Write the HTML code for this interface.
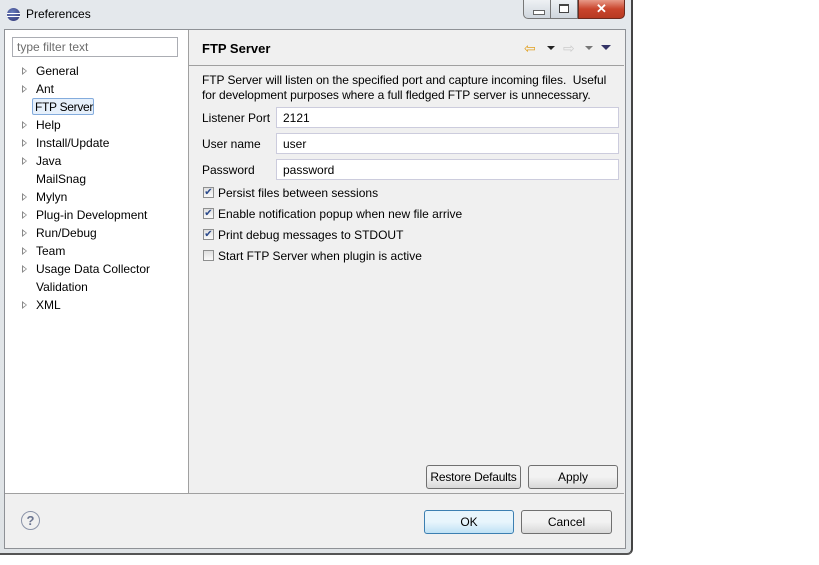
<!DOCTYPE html>
<html><head><style>
body{margin:0;width:819px;height:565px;background:#fff;position:relative;overflow:hidden;font-family:"Liberation Sans",sans-serif;font-size:12px;color:#000}
.abs{position:absolute}
.frame{left:0;top:0;width:631px;height:553px;background:linear-gradient(#e4e8ec,#dfe3e6);border-right:2px solid #444;border-bottom:2px solid #555;border-radius:0 0 6px 0}
.inner{left:4px;top:29px;width:620px;height:518px;background:#f0f0f0;border:1px solid #8e9196}
.tree{left:5px;top:30px;width:183px;height:463px;background:#fff;border-right:1px solid #a0a0a0}
.input{background:#fff;border:1px solid #ccd;box-sizing:border-box}
.item{position:absolute;left:36px;font-size:12px}
.tri{position:absolute;left:22px;width:0;height:0;border-left:5px solid #888;border-top:4px solid transparent;border-bottom:4px solid transparent}
.tri::after{content:"";position:absolute;left:-4px;top:-2px;border-left:3px solid #fff;border-top:2px solid transparent;border-bottom:2px solid transparent}
.btn{position:absolute;box-sizing:border-box;border:1px solid #707070;border-radius:3px;background:linear-gradient(#f2f2f2 50%,#d8d8d8);text-align:center;font-size:12px}
.cb{position:absolute;left:203px;width:11px;height:11px;border:1px solid #8e8f8f;background:linear-gradient(#e0e0e0,#fafafa);box-sizing:border-box;font-size:10px;line-height:9px;text-align:center;color:#2b4a8c}
.cl{position:absolute;left:218px}
</style></head><body>
<div class="abs frame"></div>
<div class="abs" style="left:7px;top:8px;width:13px;height:13px;border-radius:50%;background:radial-gradient(circle at 40% 35%,#6a7fc0,#2c2f6e)"></div>
<div class="abs" style="left:7px;top:13px;width:13px;height:1px;background:#fff"></div>
<div class="abs" style="left:7px;top:16px;width:13px;height:1px;background:#fff"></div>
<div class="abs" style="left:26px;top:7px;font-size:12px">Preferences</div>
<div class="abs" style="left:523px;top:0;width:28px;height:19px;border:1px solid #777;border-top:none;border-radius:0 0 0 5px;background:linear-gradient(#eef1f4,#cfd6dd);box-sizing:border-box"><div class="abs" style="left:9px;top:10px;width:10px;height:3px;border:1px solid #666;background:#fff"></div></div>
<div class="abs" style="left:551px;top:0;width:27px;height:19px;border:1px solid #777;border-top:none;border-left:none;background:linear-gradient(#eef1f4,#cfd6dd);box-sizing:border-box"><div class="abs" style="left:8px;top:4px;width:8px;height:6px;border:1px solid #444;border-top-width:2px;background:#fff"></div></div>
<div class="abs" style="left:578px;top:0;width:47px;height:19px;border:1px solid #6d2a1e;border-top:none;border-radius:0 0 5px 0;background:linear-gradient(#e79a88,#c9452d 50%,#b73a22);box-sizing:border-box;color:#fff;font-weight:bold;text-align:center;font-size:13px;line-height:17px">✕</div>
<div class="abs inner"></div>
<div class="abs tree"></div>
<div class="abs input" style="left:12px;top:37px;width:166px;height:20px;border-color:#abadb3;color:#6d6d6d;padding:2px 4px;font-size:12px">type filter text</div>
<div class="tri" style="top:67px"></div><div class="item" style="top:64px">General</div>
<div class="tri" style="top:85px"></div><div class="item" style="top:82px">Ant</div>
<div class="abs" style="left:32px;top:98px;width:62px;height:17px;border:1px solid #84acdd;border-radius:2px;background:#e6f0fb;box-sizing:border-box"></div>
<div class="item" style="top:100px;left:35px;letter-spacing:-0.3px">FTP Server</div>
<div class="tri" style="top:121px"></div><div class="item" style="top:118px">Help</div>
<div class="tri" style="top:139px"></div><div class="item" style="top:136px">Install/Update</div>
<div class="tri" style="top:157px"></div><div class="item" style="top:154px">Java</div>
<div class="item" style="top:172px">MailSnag</div>
<div class="tri" style="top:193px"></div><div class="item" style="top:190px">Mylyn</div>
<div class="tri" style="top:211px"></div><div class="item" style="top:208px">Plug-in Development</div>
<div class="tri" style="top:229px"></div><div class="item" style="top:226px">Run/Debug</div>
<div class="tri" style="top:247px"></div><div class="item" style="top:244px">Team</div>
<div class="tri" style="top:265px"></div><div class="item" style="top:262px">Usage Data Collector</div>
<div class="item" style="top:280px">Validation</div>
<div class="tri" style="top:301px"></div><div class="item" style="top:298px">XML</div>
<div class="abs" style="left:202px;top:41px;font-weight:bold;font-size:13px">FTP Server</div>
<div class="abs" style="left:189px;top:65px;width:435px;height:1px;background:#a0a0a0"></div>
<div class="abs" style="left:524px;top:42px;font-size:14px;color:#e0a020;line-height:12px">⇦</div>
<div class="abs" style="left:547px;top:46px;border-top:4px solid #222;border-left:4px solid transparent;border-right:4px solid transparent"></div>
<div class="abs" style="left:563px;top:42px;font-size:14px;color:#ccc;line-height:12px">⇨</div>
<div class="abs" style="left:585px;top:46px;border-top:4px solid #777;border-left:4px solid transparent;border-right:4px solid transparent"></div>
<div class="abs" style="left:601px;top:45px;border-top:5px solid #333366;border-left:5px solid transparent;border-right:5px solid transparent"></div>
<div class="abs" style="left:202px;top:73px;line-height:15px;letter-spacing:-0.08px">FTP Server will listen on the specified port and capture incoming files.&nbsp; Useful<br>for development purposes where a full fledged FTP server is unnecessary.</div>
<div class="abs" style="left:202px;top:111px">Listener Port</div>
<div class="abs input" style="left:276px;top:107px;width:343px;height:21px;padding:3px 6px">2121</div>
<div class="abs" style="left:202px;top:137px">User name</div>
<div class="abs input" style="left:276px;top:133px;width:343px;height:21px;padding:3px 6px">user</div>
<div class="abs" style="left:202px;top:163px">Password</div>
<div class="abs input" style="left:276px;top:159px;width:343px;height:21px;padding:3px 6px">password</div>
<div class="cb" style="top:187px">✔</div><div class="cl" style="top:186px">Persist files between sessions</div>
<div class="cb" style="top:208px">✔</div><div class="cl" style="top:207px">Enable notification popup when new file arrive</div>
<div class="cb" style="top:229px">✔</div><div class="cl" style="top:228px">Print debug messages to STDOUT</div>
<div class="cb" style="top:250px"></div><div class="cl" style="top:249px">Start FTP Server when plugin is active</div>
<div class="btn" style="left:426px;top:465px;width:95px;height:24px;line-height:22px;letter-spacing:-0.2px">Restore Defaults</div>
<div class="btn" style="left:528px;top:465px;width:90px;height:24px;line-height:22px">Apply</div>
<div class="abs" style="left:5px;top:493px;width:619px;height:1px;background:#a0a0a0"></div>
<div class="abs" style="left:21px;top:511px;width:19px;height:19px;border:1px solid #8a93a8;border-radius:50%;box-sizing:border-box;text-align:center;font-weight:bold;color:#6b7590;font-size:13px;line-height:17px">?</div>
<div class="btn" style="left:424px;top:510px;width:90px;height:24px;line-height:22px;border-color:#3c7fb1;background:linear-gradient(#e8f5fc 50%,#bfe1f5)">OK</div>
<div class="btn" style="left:521px;top:510px;width:91px;height:24px;line-height:22px">Cancel</div>
</body></html>
